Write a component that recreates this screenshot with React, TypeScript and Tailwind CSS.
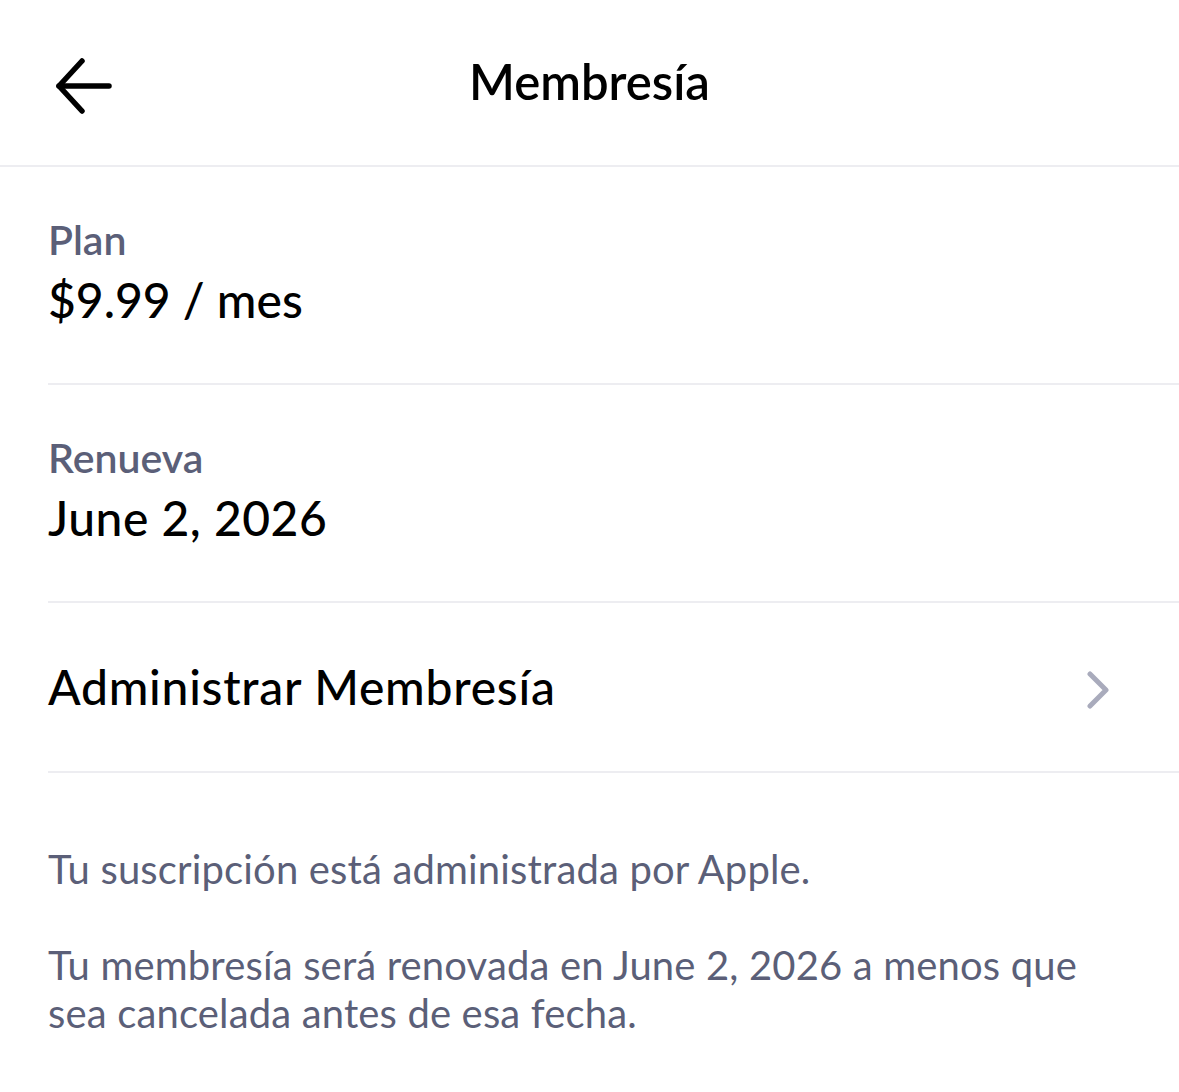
import React from "react";

const font = { fontFamily: "Lato, 'Noto Sans', sans-serif" };

export default function App() {
  return (
    <div className="w-[1179px] h-[1092px] bg-white text-black overflow-hidden" style={font}>
      <header className="relative h-[167px] flex items-center justify-center border-b-2 border-[#ededf1]">
        <button className="absolute left-[54px] top-[58px] w-[60px] h-[56px] flex items-center justify-center">
          <svg width="60" height="56" viewBox="0 0 60 56" fill="none" stroke="#000" strokeWidth="5.5" strokeLinecap="round" strokeLinejoin="round">
            <path d="M5 28 H55" />
            <path d="M28 3 L5 28 L28 53" />
          </svg>
        </button>
        <h1 className="text-[49px] font-semibold tracking-[0px] mt-[-2px]">Membresía</h1>
      </header>

      <div className="pl-[48px]">
        <div className="h-[218px] border-b-2 border-[#ededf1] pt-[45px]">
          <div className="text-[41px] leading-[56px] font-semibold text-[#5b5f78]">Plan</div>
          <div className="text-[48px] leading-[64px] font-medium">$9.99 / mes</div>
        </div>
        <div className="h-[218px] border-b-2 border-[#ededf1] pt-[45px]">
          <div className="text-[41px] leading-[56px] font-semibold text-[#5b5f78]">Renueva</div>
          <div className="text-[48px] leading-[64px] font-medium tracking-[0.5px]">June 2, 2026</div>
        </div>
        <div className="h-[170px] border-b-2 border-[#ededf1] flex items-center justify-between pr-[70px]">
          <span className="text-[48px] font-medium tracking-[0.75px]">Administrar Membresía</span>
          <svg className="mt-[6px]" width="22" height="38" viewBox="0 0 22 38" fill="none" stroke="#a9abbc" strokeWidth="5" strokeLinecap="round" strokeLinejoin="round">
            <path d="M3 3 L19 19 L3 35" />
          </svg>
        </div>
        <div className="pt-[72px] pr-[60px] text-[40px] leading-[48px] text-[#5b5f78] tracking-[0.15px]">
          <p>Tu suscripción está administrada por Apple.</p>
          <p className="mt-[48px]">Tu membresía será renovada en June 2, 2026 a menos que sea cancelada antes de esa fecha.</p>
        </div>
      </div>
    </div>
  );
}
